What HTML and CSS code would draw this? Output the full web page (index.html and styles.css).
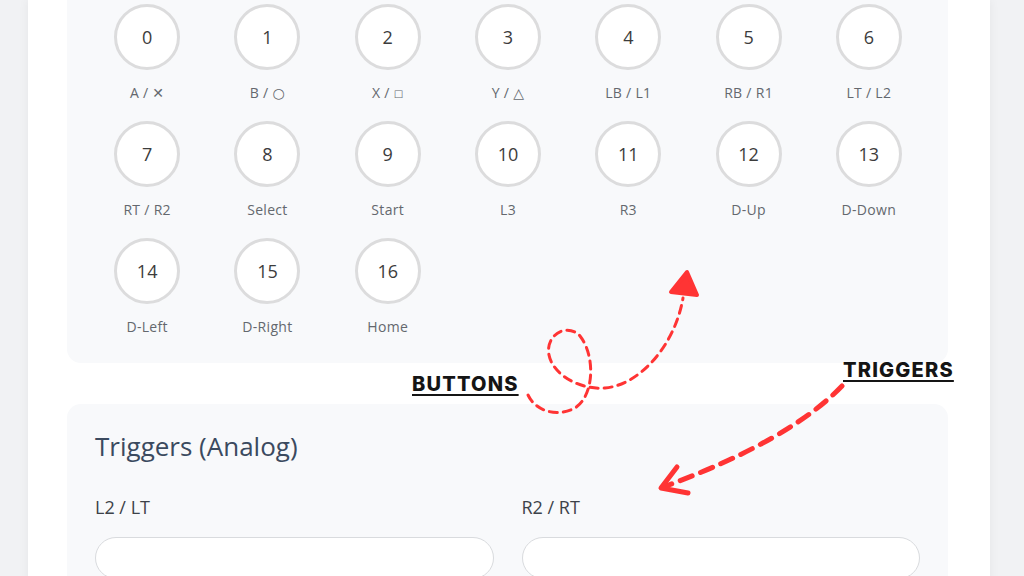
FILE: index.html
```html
<!DOCTYPE html>
<html lang="en">
<head>
<meta charset="utf-8">
<title>Gamepad Tester</title>
<link rel="stylesheet" href="styles.css">
</head>
<body>
<div class="page">
  <main class="card">
    <section class="panel panel-buttons">
      <div class="btn-grid">
        <div class="btn-cell"><div class="btn-circle">0</div><div class="btn-label">A / ✕</div></div>
        <div class="btn-cell"><div class="btn-circle">1</div><div class="btn-label">B / ○</div></div>
        <div class="btn-cell"><div class="btn-circle">2</div><div class="btn-label">X / <span class="sq">□</span></div></div>
        <div class="btn-cell"><div class="btn-circle">3</div><div class="btn-label">Y / △</div></div>
        <div class="btn-cell"><div class="btn-circle">4</div><div class="btn-label">LB / L1</div></div>
        <div class="btn-cell"><div class="btn-circle">5</div><div class="btn-label">RB / R1</div></div>
        <div class="btn-cell"><div class="btn-circle">6</div><div class="btn-label">LT / L2</div></div>
        <div class="btn-cell"><div class="btn-circle">7</div><div class="btn-label">RT / R2</div></div>
        <div class="btn-cell"><div class="btn-circle">8</div><div class="btn-label">Select</div></div>
        <div class="btn-cell"><div class="btn-circle">9</div><div class="btn-label">Start</div></div>
        <div class="btn-cell"><div class="btn-circle">10</div><div class="btn-label">L3</div></div>
        <div class="btn-cell"><div class="btn-circle">11</div><div class="btn-label">R3</div></div>
        <div class="btn-cell"><div class="btn-circle">12</div><div class="btn-label">D-Up</div></div>
        <div class="btn-cell"><div class="btn-circle">13</div><div class="btn-label">D-Down</div></div>
        <div class="btn-cell"><div class="btn-circle">14</div><div class="btn-label">D-Left</div></div>
        <div class="btn-cell"><div class="btn-circle">15</div><div class="btn-label">D-Right</div></div>
        <div class="btn-cell"><div class="btn-circle">16</div><div class="btn-label">Home</div></div>
      </div>
    </section>
    <section class="panel panel-triggers">
      <h2 class="panel-title">Triggers (Analog)</h2>
      <div class="trigger-grid">
        <div class="trigger">
          <div class="trigger-label">L2 / LT</div>
          <div class="trigger-bar"></div>
        </div>
        <div class="trigger">
          <div class="trigger-label">R2 / RT</div>
          <div class="trigger-bar"></div>
        </div>
      </div>
    </section>
  </main>

  <div class="annot annot-buttons">BUTTONS</div>
  <div class="annot annot-triggers">TRIGGERS</div>

  <svg class="arrows" width="1024" height="576" viewBox="0 0 1024 576" aria-hidden="true">
    <path class="arrow-loop" d="M528,395 C535,410 555,418 575,408 C595,395 595,355 580,336 C567,322 545,335 549,355 C553,375 580,390 605,388 C640,385 675,345 683,298"/>
    <path class="arrow-head-fill" d="M687,272 L671,292 L697,295 Z"/>
    <path class="arrow-curve" d="M842,386 Q790,440 666,486"/>
    <path class="arrow-head-open" d="M677,467 L661,488 L688,493"/>
  </svg>
</div>
</body>
</html>
```

FILE: styles.css
```css
* {
  box-sizing: border-box;
}

html, body {
  margin: 0;
  padding: 0;
}

body {
  background: #f1f2f4;
  font-family: "Open Sans", "Noto Sans", "DejaVu Sans", sans-serif;
  height: 576px;
  overflow: hidden;
}

.page {
  position: relative;
  width: 1024px;
  height: 576px;
  overflow: hidden;
}

.card {
  margin-left: 28px;
  width: 962px;
  min-height: 640px;
  background: #ffffff;
  box-shadow: 0 0 10px rgba(0, 0, 0, 0.06);
  padding: 0 42px 0 39px;
}

.panel {
  background: #f8f9fb;
  border-radius: 14px;
}

.panel-buttons {
  border-radius: 0 0 14px 14px;
  padding: 4px 19px 28px 20px;
}

.btn-grid {
  display: grid;
  grid-template-columns: repeat(7, 1fr);
  row-gap: 20px;
}

.btn-cell {
  display: flex;
  flex-direction: column;
  align-items: center;
}

.btn-circle {
  width: 66px;
  height: 66px;
  border-radius: 50%;
  border: 3px solid #dcdcdd;
  background: #ffffff;
  display: flex;
  align-items: center;
  justify-content: center;
  font-size: 18px;
  color: #3c3c3c;
}

.btn-label {
  margin-top: 15px;
  font-size: 14px;
  line-height: 16px;
  letter-spacing: 0.3px;
  color: #64686e;
  white-space: nowrap;
}

.sq {
  font-size: 10px;
  vertical-align: 1px;
}

.panel-triggers {
  margin-top: 41px;
  padding: 26px 28px 40px 28px;
}

.panel-title {
  margin: 0;
  font-size: 26px;
  line-height: 33px;
  font-weight: 500;
  color: #3b4a5f;
}

.trigger-grid {
  margin-top: 32px;
  display: grid;
  grid-template-columns: 1fr 1fr;
  column-gap: 28px;
}

.trigger-label {
  font-size: 18px;
  line-height: 24px;
  color: #3d4249;
  margin-bottom: 18px;
}

.trigger-bar {
  height: 42px;
  border: 1.5px solid #d9dbde;
  border-radius: 21px;
  background: #ffffff;
}

.annot {
  position: absolute;
  font-family: "Inter", "DejaVu Sans", sans-serif;
  font-weight: 800;
  font-size: 20px;
  line-height: 20px;
  color: #151515;
  text-decoration: underline;
  text-decoration-thickness: 2px;
  text-underline-offset: 3px;
  letter-spacing: 1.2px;
}

.annot-buttons {
  left: 412px;
  top: 374px;
}

.annot-triggers {
  left: 843px;
  top: 360px;
}

.arrows {
  position: absolute;
  left: 0;
  top: 0;
  pointer-events: none;
}

.arrow-loop {
  fill: none;
  stroke: #ff3434;
  stroke-width: 3;
  stroke-dasharray: 8 6;
  stroke-linecap: round;
}

.arrow-head-fill {
  fill: #ff3434;
  stroke: #ff3434;
  stroke-width: 4;
  stroke-linejoin: round;
}

.arrow-curve {
  fill: none;
  stroke: #ff3434;
  stroke-width: 5;
  stroke-dasharray: 13 9;
  stroke-linecap: round;
}

.arrow-head-open {
  fill: none;
  stroke: #ff3434;
  stroke-width: 5;
  stroke-linecap: round;
  stroke-linejoin: round;
}
```
